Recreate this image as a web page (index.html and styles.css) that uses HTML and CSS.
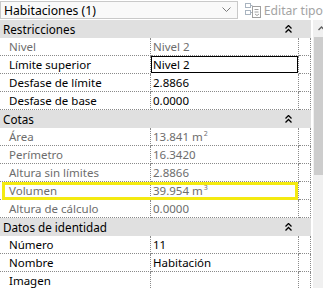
FILE: index.html
```html
<!DOCTYPE html>
<html lang="es">
<head>
  <meta charset="UTF-8" />
  <meta name="viewport" content="width=device-width, initial-scale=1.0" />
  <title>Propiedades</title>
  <link rel="stylesheet" href="styles.css">
</head>
<body>
  <div class="toolbar">
    <div class="type-select">
      <span>Habitaciones (1)</span>
      <svg class="chev" width="9" height="6" viewBox="0 0 9 6"><path d="M0.5 0.5 L4.5 4.5 L8.5 0.5" fill="none" stroke="#7a7a7a" stroke-width="1"/></svg>
    </div>
    <div class="edit-type">
      <svg width="16" height="15" viewBox="0 0 16 15">
        <rect x="0.5" y="0.5" width="5" height="4" fill="none" stroke="#a9b4c0"/>
        <rect x="0.5" y="7.5" width="5" height="4" fill="none" stroke="#a9b4c0"/>
        <path d="M5.5 2.5 H7.5 M5.5 9.5 H7.5" stroke="#a9b4c0"/>
        <rect x="7.5" y="3.5" width="8" height="11" fill="#fff" stroke="#a0a0a0"/>
        <path d="M9.5 6.5 H13.5 M9.5 9 H13.5 M10 11 L12 12.5 L14 11" fill="none" stroke="#a0a0a0"/>
      </svg>
      <span>Editar tipo</span>
    </div>
  </div>

  <div class="panel">
    <div class="grid">
      <div class="group">Restricciones <svg class="collapse" width="7" height="8" viewBox="0 0 7 8"><path d="M0.5 3.5 L3.5 0.5 L6.5 3.5 M0.5 7.5 L3.5 4.5 L6.5 7.5" fill="none" stroke="#000" stroke-width="1.3"/></svg></div>
      <div class="row ro"><div class="label">Nivel</div><div class="value">Nivel 2</div><div class="extra"></div></div>
      <div class="row"><div class="label">Límite superior</div><div class="value editing">Nivel 2</div><div class="extra"></div></div>
      <div class="row"><div class="label">Desfase de límite</div><div class="value">2.8866</div><div class="extra"></div></div>
      <div class="row"><div class="label">Desfase de base</div><div class="value">0.0000</div><div class="extra"></div></div>

      <div class="group">Cotas <svg class="collapse" width="7" height="8" viewBox="0 0 7 8"><path d="M0.5 3.5 L3.5 0.5 L6.5 3.5 M0.5 7.5 L3.5 4.5 L6.5 7.5" fill="none" stroke="#000" stroke-width="1.3"/></svg></div>
      <div class="row ro"><div class="label">Área</div><div class="value">13.841 m<sup>2</sup></div><div class="extra"></div></div>
      <div class="row ro"><div class="label">Perímetro</div><div class="value">16.3420</div><div class="extra"></div></div>
      <div class="row ro"><div class="label">Altura sin límites</div><div class="value">2.8866</div><div class="extra"></div></div>
      <div class="row ro marked"><div class="label">Volumen</div><div class="value">39.954 m<sup>3</sup></div><div class="extra"></div></div>
      <div class="row ro"><div class="label">Altura de cálculo</div><div class="value">0.0000</div><div class="extra"></div></div>

      <div class="group">Datos de identidad <svg class="collapse" width="7" height="8" viewBox="0 0 7 8"><path d="M0.5 3.5 L3.5 0.5 L6.5 3.5 M0.5 7.5 L3.5 4.5 L6.5 7.5" fill="none" stroke="#000" stroke-width="1.3"/></svg></div>
      <div class="row"><div class="label">Número</div><div class="value">11</div><div class="extra"></div></div>
      <div class="row"><div class="label">Nombre</div><div class="value">Habitación</div><div class="extra"></div></div>
      <div class="row"><div class="label">Imagen</div><div class="value"></div><div class="extra"></div></div>
    </div>

    <div class="scrollbar">
      <div class="arrow"><svg width="7" height="5" viewBox="0 0 7 5"><path d="M0.5 4 L3.5 1 L6.5 4" fill="none" stroke="#606060" stroke-width="1.4"/></svg></div>
      <div class="thumb"></div>
    </div>
  </div>
</body>
</html>
```

FILE: styles.css
```css
body {
  margin: 0;
  width: 323px;
  height: 288px;
  overflow: hidden;
  background: #fff;
  font-family: "Noto Sans", "Open Sans", sans-serif;
  font-size: 11.5px;
  color: #000;
}
.toolbar {
  height: 20px;
  display: flex;
  align-items: center;
  background: #fff;
}
.type-select {
  width: 238px;
  height: 18px;
  border: 1px solid #c9c9c9;
  background: #f9f9f9;
  display: flex;
  align-items: center;
  justify-content: space-between;
  padding: 0 6px 0 3px;
  box-sizing: border-box;
  font-size: 12.2px;
}
.edit-type {
  display: flex;
  align-items: center;
  gap: 3px;
  margin-left: 7px;
  color: #a3a3a3;
  font-size: 12.2px;
  white-space: nowrap;
}
.panel {
  display: flex;
}
.grid {
  width: 311px;
}
.group {
  height: 18px;
  background: #e0e0e0;
  display: flex;
  align-items: center;
  justify-content: space-between;
  padding: 0 19px 0 3px;
  font-size: 11.7px;
}
.row {
  position: relative;
  height: 18px;
  display: grid;
  grid-template-columns: 151px 148px 12px;
}
.row > div {
  border-bottom: 1px dotted #8a8a8a;
  border-right: 1px dotted #8a8a8a;
  box-sizing: border-box;
  display: flex;
  align-items: center;
  white-space: nowrap;
}
.label {
  padding-left: 9px;
}
.value {
  padding-left: 2px;
}
.ro {
  color: #6d6d6d;
}
.value.editing {
  box-shadow: inset 0 0 0 1px #000;
  border-bottom-color: transparent;
}
.marked::after {
  content: "";
  position: absolute;
  left: 2px;
  top: 0;
  width: 296px;
  height: 18px;
  box-sizing: border-box;
  border: 3px solid #f4ea10;
}
sup {
  font-size: 7px;
  align-self: flex-start;
  margin-top: 1px;
  margin-left: 1px;
}
.scrollbar {
  margin-left: 2px;
  width: 17px;
  height: 270px;
  background: #f0f0f0;
}
.arrow {
  height: 17px;
  display: flex;
  align-items: center;
  padding-left: 5px;
}
.thumb {
  margin-left: 1px;
  height: 138px;
  background: #cdcdcd;
}
```
